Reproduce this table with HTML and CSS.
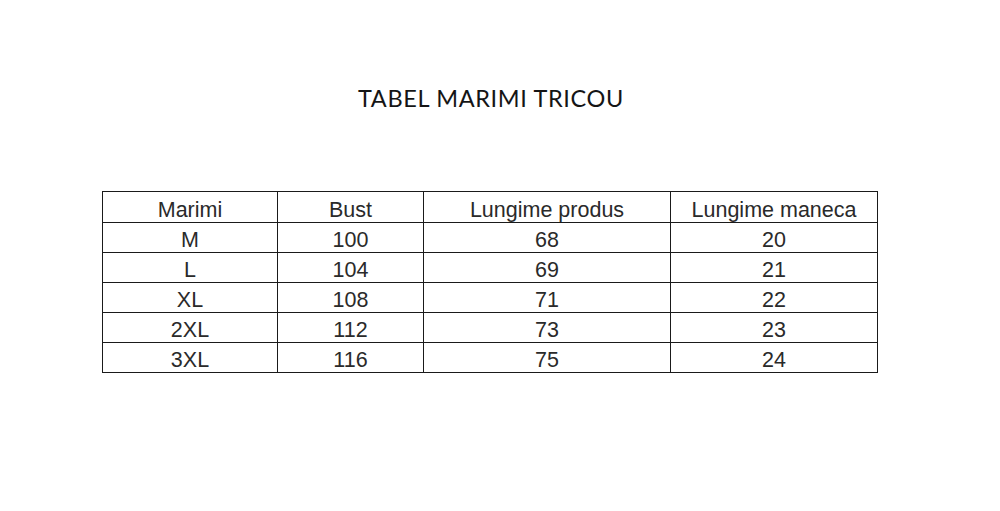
FILE: index.html
```html
<!DOCTYPE html>
<html lang="ro">
<head>
<meta charset="utf-8">
<title>Tabel marimi tricou</title>
<link rel="stylesheet" href="styles.css">
</head>
<body>
<main class="page">
  <h1 class="title">TABEL MARIMI TRICOU</h1>
  <table class="sizes">
    <colgroup>
      <col class="c1"><col class="c2"><col class="c3"><col class="c4">
    </colgroup>
    <thead>
      <tr class="head"><th>Marimi</th><th>Bust</th><th>Lungime produs</th><th>Lungime maneca</th></tr>
    </thead>
    <tbody>
      <tr><td>M</td><td>100</td><td>68</td><td>20</td></tr>
      <tr><td>L</td><td>104</td><td>69</td><td>21</td></tr>
      <tr><td>XL</td><td>108</td><td>71</td><td>22</td></tr>
      <tr><td>2XL</td><td>112</td><td>73</td><td>23</td></tr>
      <tr><td>3XL</td><td>116</td><td>75</td><td>24</td></tr>
    </tbody>
  </table>
</main>
</body>
</html>
```

FILE: styles.css
```css
html, body {
  margin: 0;
  padding: 0;
  background: #ffffff;
}
.page {
  width: 776px;
  margin-left: 102px;
  padding-top: 83px;
}
.title {
  margin: 0 0 78px 0;
  padding-left: 2px;
  font-family: "Lato", "Open Sans", sans-serif;
  font-weight: 400;
  font-size: 23.5px;
  letter-spacing: 0.65px;
  line-height: 30px;
  color: #151515;
  text-align: center;
}
.sizes {
  border-collapse: collapse;
  table-layout: fixed;
  width: 776px;
  font-family: "Liberation Sans", Arial, sans-serif;
  font-size: 21.5px;
  color: #2a2a2a;
}
.c1 { width: 175px; }
.c2 { width: 146px; }
.c3 { width: 247px; }
.c4 { width: 207px; }
.sizes th, .sizes td {
  border: 1px solid #1a1a1a;
  height: 29px;
  padding: 0;
  font-weight: 400;
  text-align: center;
  vertical-align: bottom;
  line-height: 24px;
}
.sizes .head th {
  height: 30px;
}
```
